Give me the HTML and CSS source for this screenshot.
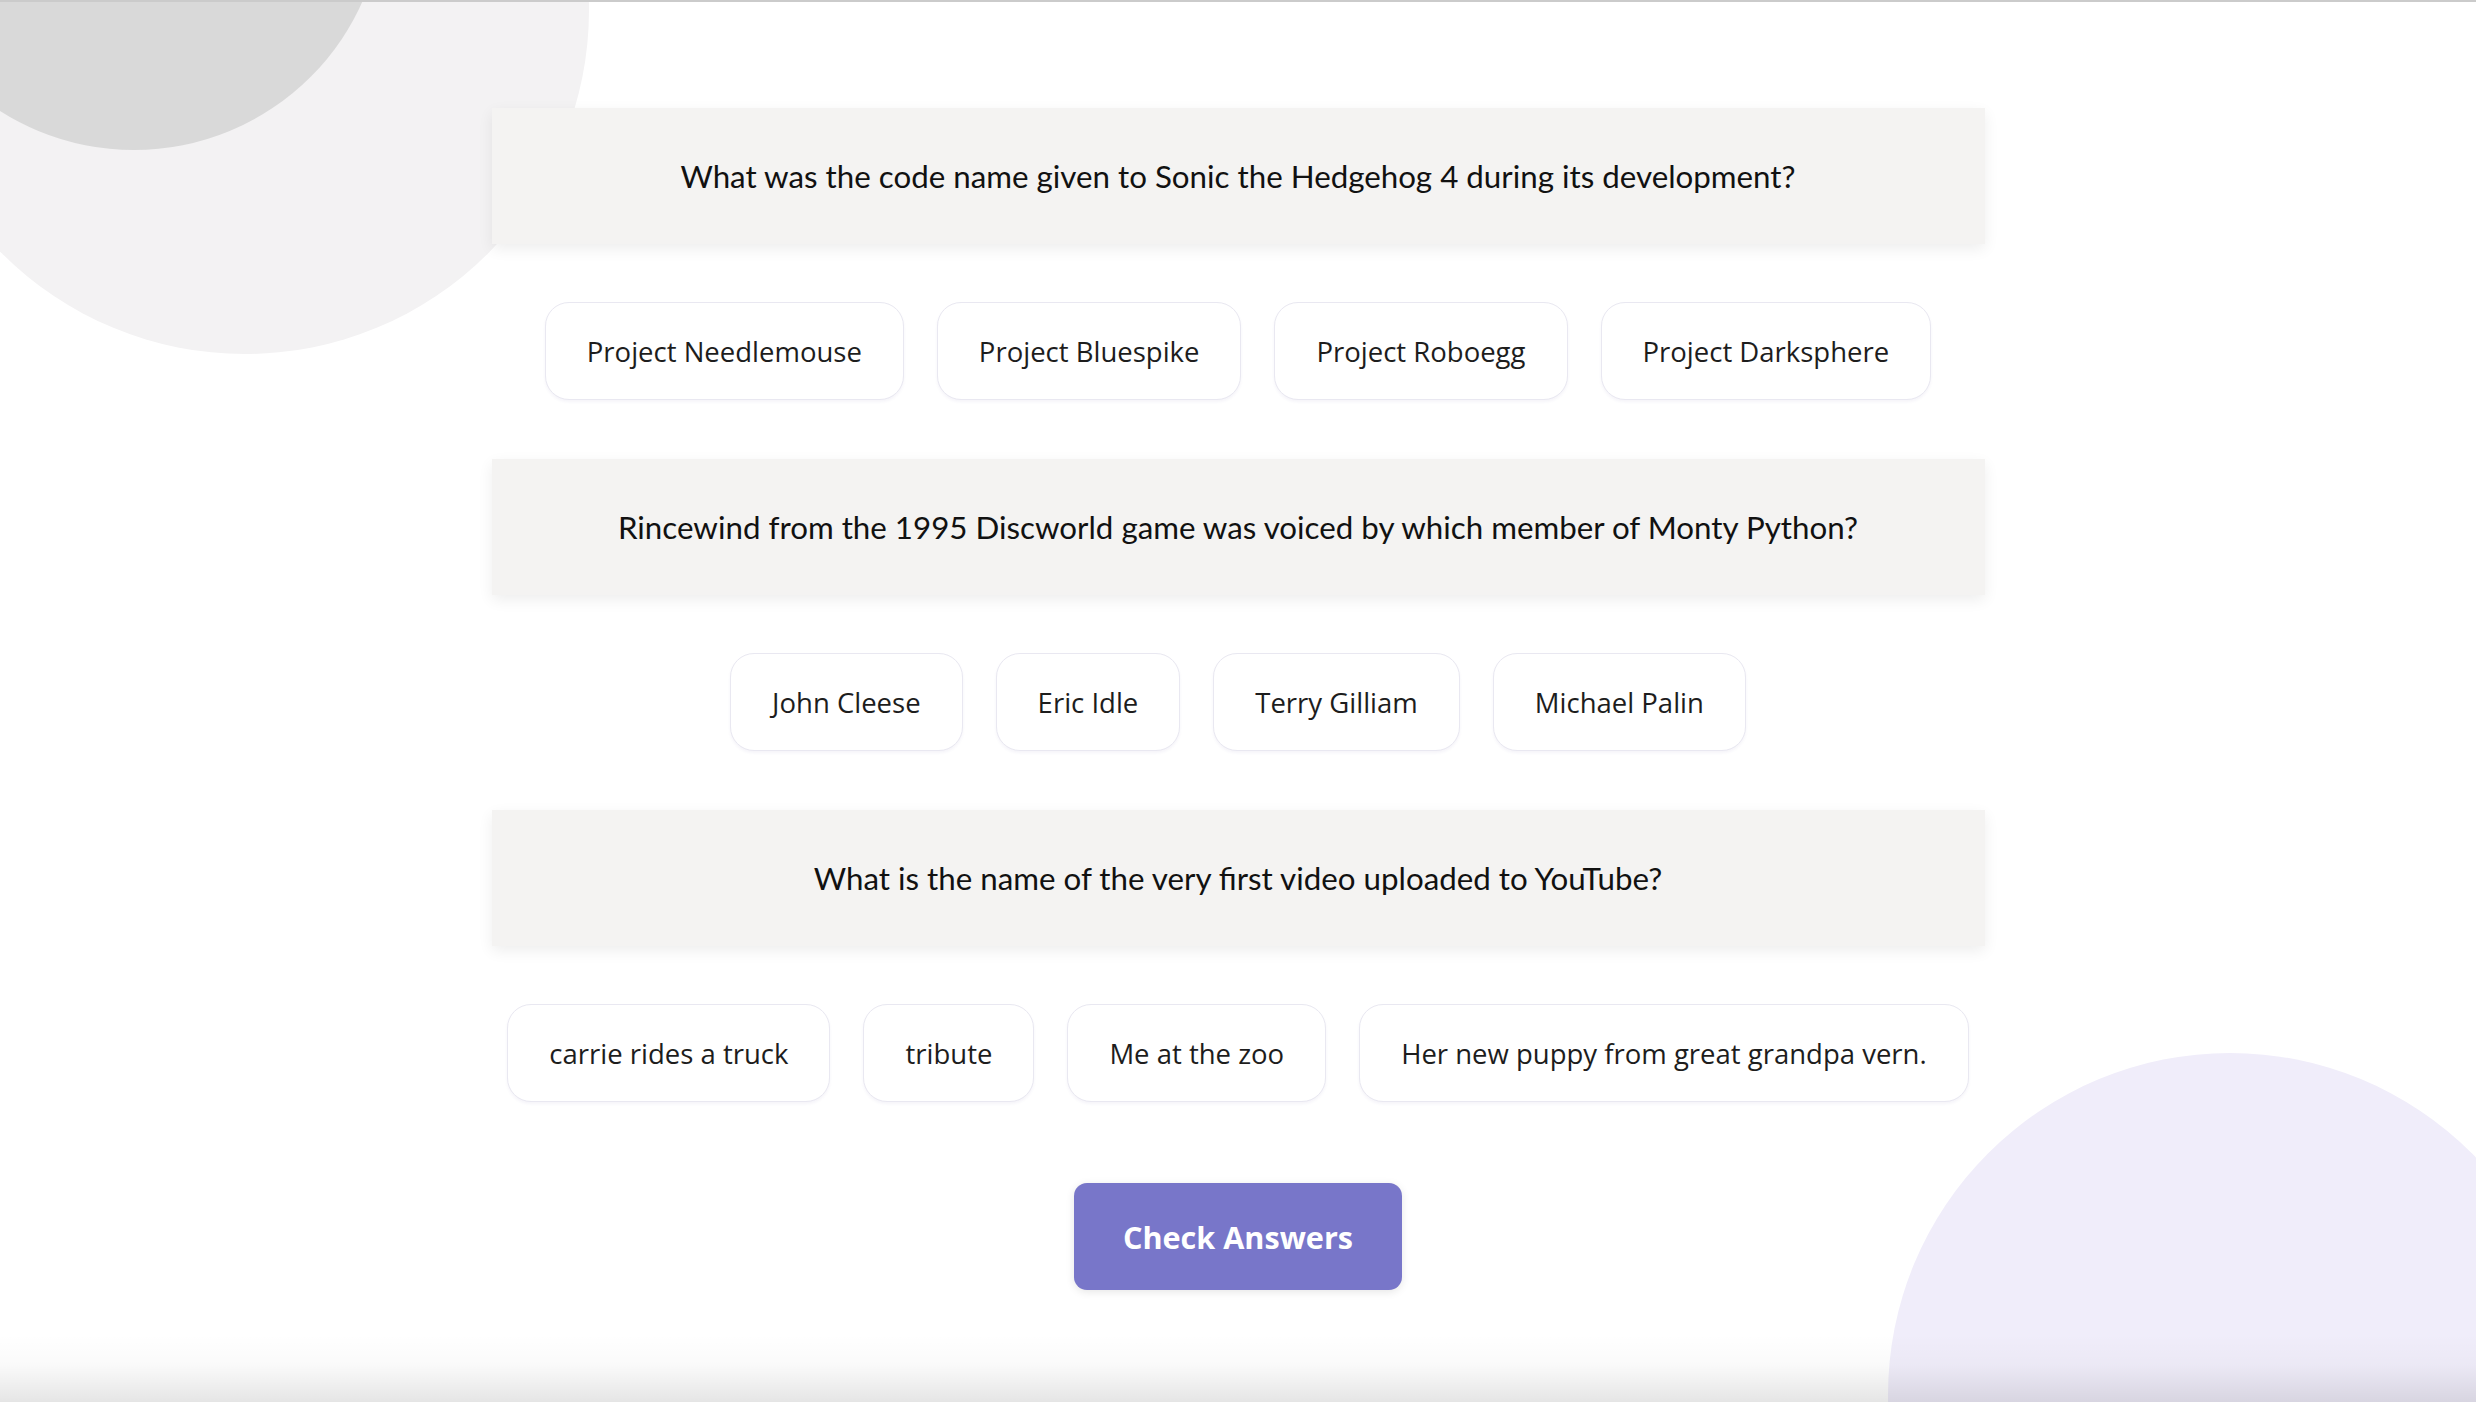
FILE: index.html
```html
<!DOCTYPE html>
<html lang="en">
<head>
<meta charset="utf-8">
<title>Quiz</title>
<link rel="stylesheet" href="styles.css">
</head>
<body>
<div class="backdrop">
  <div class="blob blob-light"></div>
  <div class="blob blob-dark"></div>
  <div class="blob blob-purple"></div>
  <div class="bottom-fade"></div>
</div>

<main class="quiz">
  <section class="item">
    <div class="question">What was the code name given to Sonic the Hedgehog 4 during its development?</div>
    <div class="answers">
      <button class="answer">Project Needlemouse</button>
      <button class="answer">Project Bluespike</button>
      <button class="answer">Project Roboegg</button>
      <button class="answer">Project Darksphere</button>
    </div>
  </section>
  <section class="item">
    <div class="question">Rincewind from the 1995 Discworld game was voiced by which member of Monty Python?</div>
    <div class="answers">
      <button class="answer">John Cleese</button>
      <button class="answer">Eric Idle</button>
      <button class="answer">Terry Gilliam</button>
      <button class="answer">Michael Palin</button>
    </div>
  </section>
  <section class="item">
    <div class="question">What is the name of the very first video uploaded to YouTube?</div>
    <div class="answers">
      <button class="answer">carrie rides a truck</button>
      <button class="answer">tribute</button>
      <button class="answer">Me at the zoo</button>
      <button class="answer">Her new puppy from great grandpa vern.</button>
    </div>
  </section>
  <div class="actions">
    <button class="check">Check Answers</button>
  </div>
</main>

<div class="topline"></div>
</body>
</html>
```
FILE: styles.css
```css
html, body {
  margin: 0;
  padding: 0;
  height: 100%;
  overflow: hidden;
  background: #ffffff;
}

body {
  position: relative;
  font-family: "Open Sans", "Noto Sans", sans-serif;
  color: #1a1a1a;
}

.backdrop {
  position: absolute;
  inset: 0;
  overflow: hidden;
  z-index: 0;
}

.blob {
  position: absolute;
  border-radius: 50%;
}

.blob-light {
  left: -99px;
  top: -334px;
  width: 688px;
  height: 688px;
  background: #f3f2f3;
}

.blob-dark {
  left: -116px;
  top: -350px;
  width: 500px;
  height: 500px;
  background: #d9d9d9;
}

.blob-purple {
  left: 1888px;
  top: 1053px;
  width: 684px;
  height: 684px;
  background: #f0edfa;
}

.bottom-fade {
  position: absolute;
  left: 0;
  right: 0;
  bottom: 0;
  height: 68px;
  background: linear-gradient(to bottom, rgba(0, 0, 0, 0), rgba(0, 0, 0, 0.02) 45%, rgba(0, 0, 0, 0.1));
}

.topline {
  position: absolute;
  top: 0;
  left: 0;
  right: 0;
  height: 2px;
  background: #cbcbcb;
  z-index: 5;
}

.quiz {
  position: relative;
  z-index: 1;
  width: 1493px;
  margin: 0 auto;
  padding-top: 108px;
  display: flex;
  flex-direction: column;
}

.question {
  height: 136px;
  display: flex;
  align-items: center;
  justify-content: center;
  background: #f4f3f2;
  box-shadow: 0 5px 14px rgba(0, 0, 0, 0.07);
  font-family: "Lato", "Open Sans", sans-serif;
  font-size: 31.3px;
  color: #111111;
  text-align: center;
}

.answers {
  display: flex;
  justify-content: center;
  gap: 33px;
  margin: 58px 0 59px;
}

.answer {
  box-sizing: border-box;
  height: 98px;
  padding: 0 41px;
  border: 1px solid #e9e8f1;
  border-radius: 24px;
  background: #ffffff;
  box-shadow: 0 2px 3px rgba(80, 70, 150, 0.06);
  font-family: "Open Sans", "Noto Sans", sans-serif;
  font-size: 27.5px;
  color: #1d1d1d;
  cursor: pointer;
  white-space: nowrap;
}

.actions {
  display: flex;
  justify-content: center;
  margin-top: 22px;
}

.check {
  width: 328px;
  height: 107px;
  border: none;
  border-radius: 13px;
  background: #7876c9;
  box-shadow: 0 2px 8px rgba(0, 0, 0, 0.1);
  color: #ffffff;
  font-family: "Open Sans", "Noto Sans", sans-serif;
  font-weight: 700;
  font-size: 30.6px;
  cursor: pointer;
}
```
